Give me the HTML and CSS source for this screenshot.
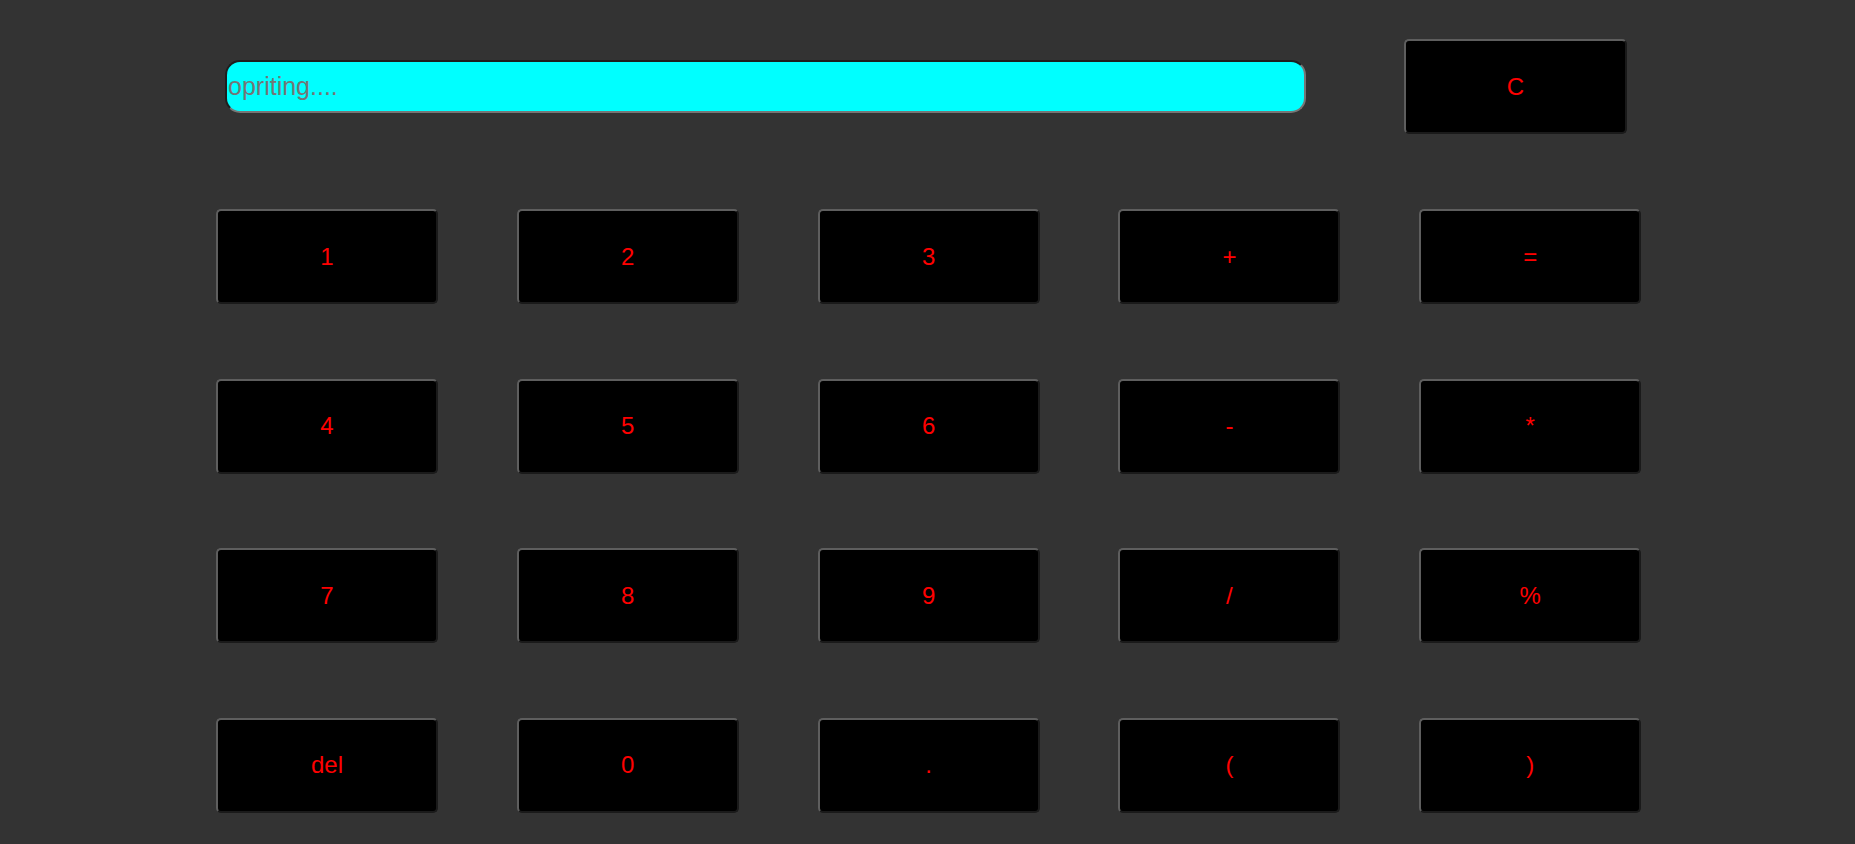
FILE: index.html
```html
<!DOCTYPE html>
<html>
<head>
<meta charset="utf-8">
<title>Calculator</title>
<link rel="stylesheet" href="styles.css">
</head>
<body>
<div class="calc">
  <div class="top">
    <input class="display" type="text" placeholder="opriting....">
    <button class="key key-clear">C</button>
  </div>
  <div class="keys">
    <button class="key">1</button>
    <button class="key">2</button>
    <button class="key">3</button>
    <button class="key">+</button>
    <button class="key">=</button>
    <button class="key">4</button>
    <button class="key">5</button>
    <button class="key">6</button>
    <button class="key">-</button>
    <button class="key">*</button>
    <button class="key">7</button>
    <button class="key">8</button>
    <button class="key">9</button>
    <button class="key">/</button>
    <button class="key">%</button>
    <button class="key">del</button>
    <button class="key">0</button>
    <button class="key">.</button>
    <button class="key">(</button>
    <button class="key">)</button>
  </div>
</div>
</body>
</html>
```

FILE: styles.css
```css
html, body {
  margin: 0;
  padding: 0;
  background: #333333;
  height: 100%;
  overflow: hidden;
}

.calc {
  font-family: "Liberation Sans", Arial, sans-serif;
}

.top {
  display: flex;
  align-items: center;
  padding-left: 225px;
  padding-top: 39px;
  gap: 98px;
}

.display {
  box-sizing: border-box;
  width: 1081px;
  height: 53px;
  margin: 0;
  padding: 0 1px;
  background: #00ffff;
  border: 2px solid;
  border-color: #1e1e1e #767676 #767676 #1e1e1e;
  border-radius: 15px;
  font-family: "Liberation Sans", Arial, sans-serif;
  font-size: 25px;
  color: #000;
  outline: none;
}

.display::placeholder {
  color: #757575;
}

.key {
  box-sizing: border-box;
  width: 222px;
  height: 95px;
  margin: 0;
  padding: 0;
  background: #000;
  color: #ff0000;
  border: 2px solid;
  border-color: #5e5e5e #1a1a1a #1a1a1a #5e5e5e;
  border-radius: 5px;
  font-family: "Liberation Sans", Arial, sans-serif;
  font-size: 24px;
}

.key-clear {
  width: 223px;
}

.keys {
  display: grid;
  grid-template-columns: repeat(5, 222px);
  grid-auto-rows: 95px;
  column-gap: 78.8px;
  row-gap: 74.6px;
  padding-left: 216px;
  margin-top: 75px;
}
```
